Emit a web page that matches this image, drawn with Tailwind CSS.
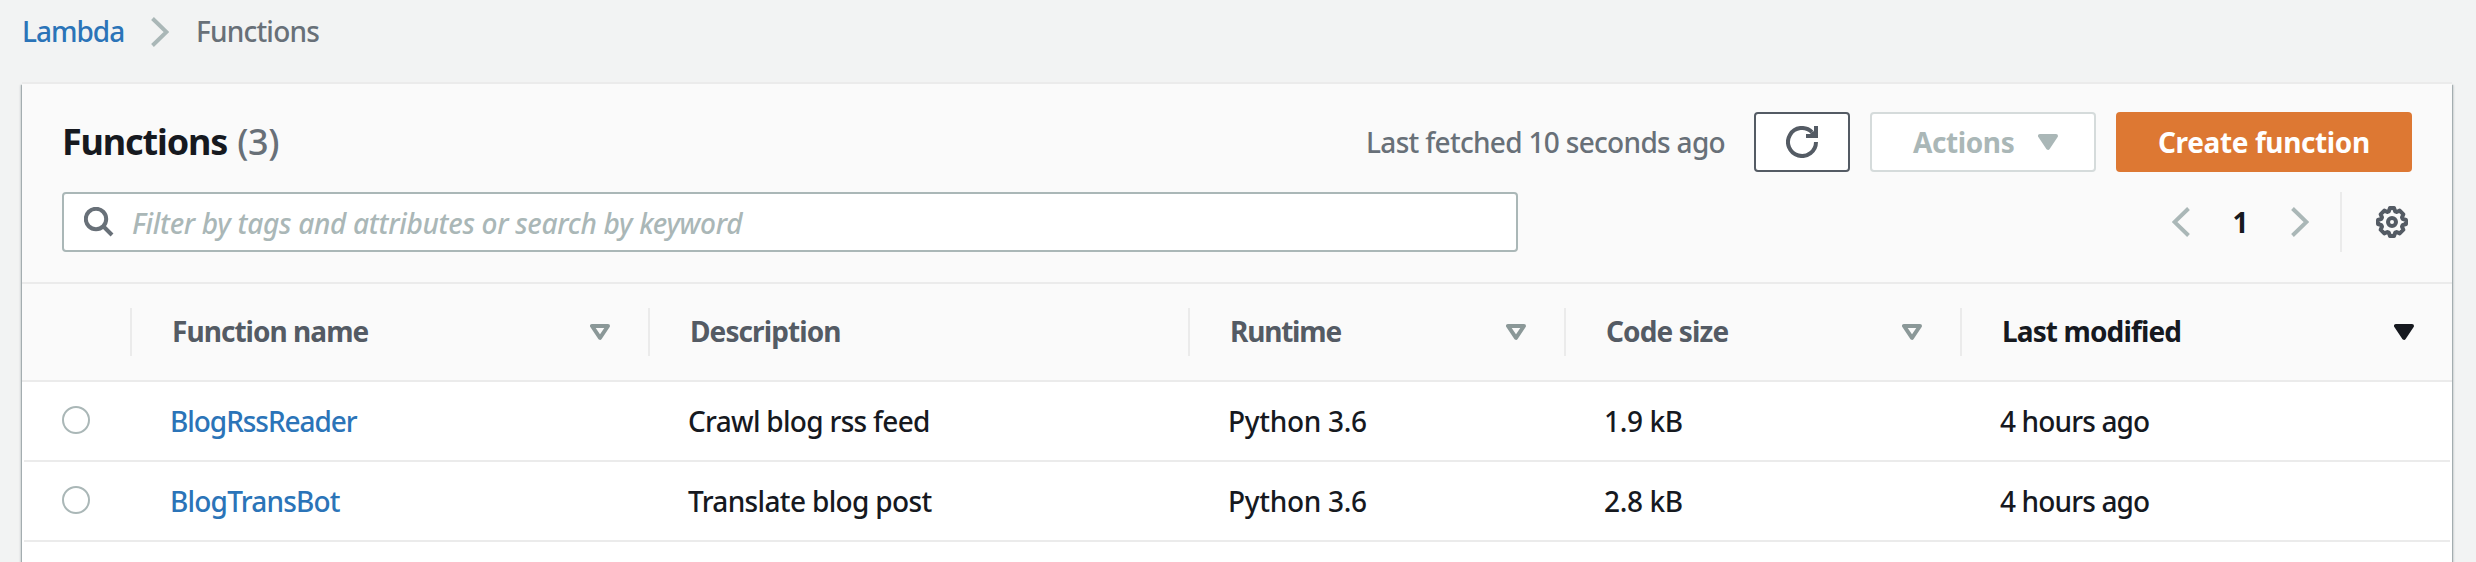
<!DOCTYPE html>
<html lang="en">
<head>
<meta charset="utf-8">
<title>Lambda - Functions</title>
<script src="https://cdn.jsdelivr.net/npm/@tailwindcss/browser@4"></script>
</head>
<body class="h-[562px] overflow-hidden bg-[#f2f3f3] font-['Noto_Sans','Open_Sans',sans-serif] text-[28px] leading-[40px] text-[#16191f]">
<svg class="hidden">
  <symbol id="chevron" viewBox="0 0 18 30"><path d="M1.5 1.5 15.5 15 1.5 28.5" fill="none" stroke="currentColor" stroke-width="4"/></symbol>
  <symbol id="sort" viewBox="0 0 20 16"><path d="M2 2h16L10 13.8z" fill="none" stroke="currentColor" stroke-width="4" stroke-linejoin="round"/></symbol>
  <symbol id="sort-filled" viewBox="0 0 20 16"><path d="M2 2h16L10 13.8z" fill="currentColor" stroke="currentColor" stroke-width="4" stroke-linejoin="round"/></symbol>
</svg>

<nav class="flex h-[82px] items-start pl-[22px] pt-[11px] font-medium whitespace-nowrap">
  <a class="w-[129px] tracking-[-1px] text-[#2b74b8]">Lambda</a>
  <svg class="mt-[6px] h-[30px] w-[18px] text-[#aab7b7]"><use href="#chevron"/></svg>
  <span class="ml-[27px] tracking-[-0.8px] text-[#687078]">Functions</span>
</nav>

<main class="ml-[22px] h-[480px] w-[2430px] bg-white whitespace-nowrap shadow-[1px_3px_1px_0_rgba(0,28,36,0.25),-1px_3px_1px_0_rgba(0,28,36,0.25),2px_3px_2px_0_rgba(0,28,36,0.1),-2px_3px_2px_0_rgba(0,28,36,0.1)]">
  <header class="h-[202px] border-y-2 border-[#ebebeb] bg-[#fafafa] px-10 pt-7">
    <div class="flex h-[60px] items-center">
      <h1 class="flex gap-[10px] text-[36px] leading-[60px]">
        <span class="font-bold tracking-[-1.15px]">Functions</span>
        <span class="font-medium tracking-[-0.4px] text-[#687078]">(3)</span>
      </h1>
      <span class="mr-[29px] ml-auto font-medium tracking-[-0.69px] text-[#687078]">Last fetched 10 seconds ago</span>
      <button class="flex h-[60px] w-24 items-center justify-center rounded-[4px] border-2 border-[#545b64] bg-white text-[#545b64]">
        <svg class="size-8" viewBox="0 0 32 32"><path d="M30 16A14 14 0 1 1 26 6.2" fill="none" stroke="currentColor" stroke-width="4"/><path d="M28 0h4v12H20V8h4l2-2 2-1z" fill="currentColor"/></svg>
      </button>
      <button class="ml-5 flex h-[60px] w-[226px] items-center rounded-[4px] border-2 border-[#d5dbdb] bg-white pl-[41px] font-bold text-[#aab7b7]">
        <span class="w-[125px] text-left tracking-[-0.4px]">Actions</span>
        <svg class="h-4 w-5"><use href="#sort-filled"/></svg>
      </button>
      <button class="ml-5 flex h-[60px] w-[296px] items-center rounded-[4px] bg-[#dd7833] pl-[42px] font-bold tracking-[-0.38px] text-white">Create function</button>
    </div>
    <div class="mt-5 flex h-[60px] items-center">
      <div class="flex h-[60px] w-[1456px] items-center rounded-[4px] border-2 border-[#aab7b7] bg-white pl-5">
        <svg class="size-[30px] text-[#687078]" viewBox="0 0 30 30" fill="none" stroke="currentColor" stroke-width="4"><circle cx="12" cy="12" r="10.2"/><path d="m19 19 9 9"/></svg>
        <span class="pt-[2px] pl-[18px] font-medium italic tracking-[-0.3px] text-[#aab7b7]">Filter by tags and attributes or search by keyword</span>
      </div>
      <svg class="ml-auto h-[30px] w-[18px] rotate-180 text-[#aab7b7]"><use href="#chevron"/></svg>
      <span class="w-[101px] text-center font-bold">1</span>
      <svg class="h-[30px] w-[18px] text-[#aab7b7]"><use href="#chevron"/></svg>
      <span class="ml-[31px] h-[60px] w-[2px] bg-[#ebebeb]"></span>
      <svg class="mr-1 ml-[34px] size-8 text-[#545b64]" viewBox="0 0 32 32" fill="none" stroke="currentColor" stroke-width="4"><path stroke-linejoin="round" d="M14 2H18L19.2 5.4 20.6 6 23.7 4.6 27.4 8.3 26 11.4 26.6 12.8 30 14V18L26.6 19.2 26 20.6 27.4 23.7 23.7 27.4 20.6 26 19.2 26.6 18 30H14L12.8 26.6 11.4 26 8.3 27.4 4.6 23.7 6 20.6 5.4 19.2 2 18V14L5.4 12.8 6 11.4 4.6 8.3 8.3 4.6 11.4 6 12.8 5.4Z"/><circle cx="16" cy="16" r="4"/></svg>
    </div>
  </header>

  <div class="grid h-[98px] grid-cols-[108px_518px_540px_376px_396px_492px] items-center border-b-2 border-[#ebebeb] bg-[#fafafa] font-bold text-[#545b64]">
    <div></div>
    <div class="flex h-12 items-center border-l-2 border-[#ebebeb] pr-[38px] pl-10"><span class="pb-[2px] tracking-[-0.96px]">Function name</span><svg class="ml-auto h-4 w-5 text-[#8b9898]"><use href="#sort"/></svg></div>
    <div class="flex h-12 items-center border-l-2 border-[#ebebeb] pl-10"><span class="pb-[2px] tracking-[-0.9px]">Description</span></div>
    <div class="flex h-12 items-center border-l-2 border-[#ebebeb] pr-[38px] pl-10"><span class="pb-[2px] tracking-[-1.2px]">Runtime</span><svg class="ml-auto h-4 w-5 text-[#8b9898]"><use href="#sort"/></svg></div>
    <div class="flex h-12 items-center border-l-2 border-[#ebebeb] pr-[38px] pl-10"><span class="pb-[2px] tracking-[-0.86px]">Code size</span><svg class="ml-auto h-4 w-5 text-[#8b9898]"><use href="#sort"/></svg></div>
    <div class="flex h-12 items-center border-l-2 border-[#ebebeb] pr-[38px] pl-10 text-[#16191f]"><span class="pb-[2px] tracking-[-0.87px]">Last modified</span><svg class="ml-auto h-4 w-5"><use href="#sort-filled"/></svg></div>
  </div>

  <div class="mx-[2px] grid h-20 grid-cols-[106px_518px_540px_376px_396px_1fr] items-center border-b-2 border-[#ebebeb] font-medium">
    <div class="mb-[2px] ml-[38px] size-7 rounded-full border-2 border-[#aab7b7]"></div>
    <a class="pl-10 tracking-[-1.05px] text-[#2b74b8]">BlogRssReader</a>
    <div class="pl-10 tracking-[-0.7px]">Crawl blog rss feed</div>
    <div class="pl-10 tracking-[-0.3px]">Python 3.6</div>
    <div class="pl-10 tracking-[-0.35px]">1.9 kB</div>
    <div class="pl-10 tracking-[-0.85px]">4 hours ago</div>
  </div>
  <div class="mx-[2px] grid h-20 grid-cols-[106px_518px_540px_376px_396px_1fr] items-center border-b-2 border-[#ebebeb] font-medium">
    <div class="mb-[2px] ml-[38px] size-7 rounded-full border-2 border-[#aab7b7]"></div>
    <a class="pl-10 tracking-[-0.8px] text-[#2b74b8]">BlogTransBot</a>
    <div class="pl-10 tracking-[-0.65px]">Translate blog post</div>
    <div class="pl-10 tracking-[-0.3px]">Python 3.6</div>
    <div class="pl-10 tracking-[-0.35px]">2.8 kB</div>
    <div class="pl-10 tracking-[-0.85px]">4 hours ago</div>
  </div>
</main>
</body>
</html>
